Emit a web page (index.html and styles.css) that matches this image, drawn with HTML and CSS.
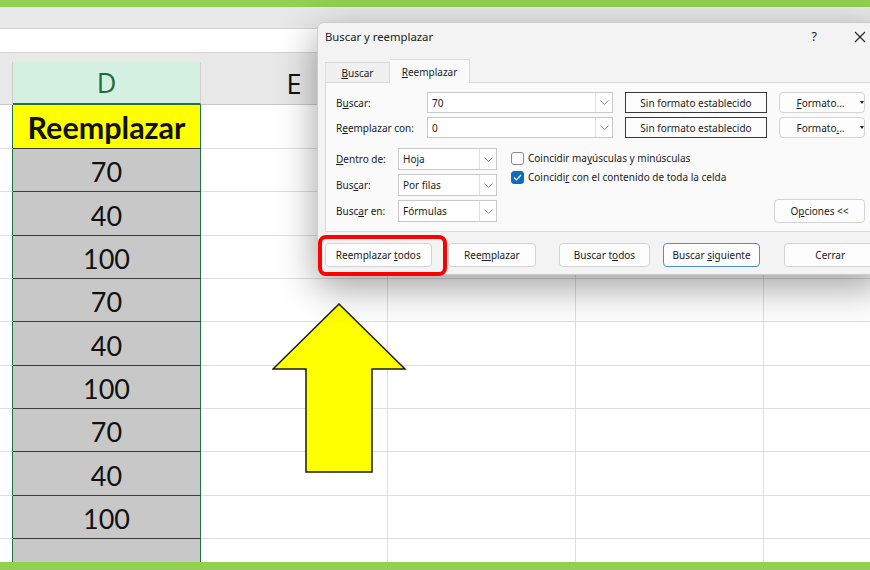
FILE: index.html
```html
<!DOCTYPE html>
<html lang="es">
<head>
    <meta charset="UTF-8">
    <title>Buscar y reemplazar</title>
    <link rel="stylesheet" href="styles.css">
</head>
<body>
<div class="pantalla">

    <div class="franja"></div>
    <div class="cinta"></div>
    <div class="barra_formula"></div>

    <!-- hoja de calculo -->
    <div class="hoja">
        <div class="fila encabezados">
            <div class="celda c"></div>
            <div class="celda d">D</div>
            <div class="celda e">E</div>
            <div class="celda f"></div>
            <div class="celda g"></div>
            <div class="celda h"></div>
        </div>
        <div class="fila primera">
            <div class="celda c"></div>
            <div class="celda d titulo_col">Reemplazar</div>
            <div class="celda e"></div><div class="celda f"></div><div class="celda g"></div><div class="celda h"></div>
        </div>
        <div class="fila">
            <div class="celda c"></div><div class="celda d">70</div>
            <div class="celda e"></div><div class="celda f"></div><div class="celda g"></div><div class="celda h"></div>
        </div>
        <div class="fila">
            <div class="celda c"></div><div class="celda d">40</div>
            <div class="celda e"></div><div class="celda f"></div><div class="celda g"></div><div class="celda h"></div>
        </div>
        <div class="fila">
            <div class="celda c"></div><div class="celda d">100</div>
            <div class="celda e"></div><div class="celda f"></div><div class="celda g"></div><div class="celda h"></div>
        </div>
        <div class="fila">
            <div class="celda c"></div><div class="celda d">70</div>
            <div class="celda e"></div><div class="celda f"></div><div class="celda g"></div><div class="celda h"></div>
        </div>
        <div class="fila">
            <div class="celda c"></div><div class="celda d">40</div>
            <div class="celda e"></div><div class="celda f"></div><div class="celda g"></div><div class="celda h"></div>
        </div>
        <div class="fila">
            <div class="celda c"></div><div class="celda d">100</div>
            <div class="celda e"></div><div class="celda f"></div><div class="celda g"></div><div class="celda h"></div>
        </div>
        <div class="fila">
            <div class="celda c"></div><div class="celda d">70</div>
            <div class="celda e"></div><div class="celda f"></div><div class="celda g"></div><div class="celda h"></div>
        </div>
        <div class="fila">
            <div class="celda c"></div><div class="celda d">40</div>
            <div class="celda e"></div><div class="celda f"></div><div class="celda g"></div><div class="celda h"></div>
        </div>
        <div class="fila">
            <div class="celda c"></div><div class="celda d">100</div>
            <div class="celda e"></div><div class="celda f"></div><div class="celda g"></div><div class="celda h"></div>
        </div>
        <div class="fila">
            <div class="celda c"></div><div class="celda d"></div>
            <div class="celda e"></div><div class="celda f"></div><div class="celda g"></div><div class="celda h"></div>
        </div>
    </div>

    <div class="franja abajo"></div>

    <!-- flecha amarilla -->
    <svg class="flecha" width="140" height="175" viewBox="0 0 140 175">
        <polygon points="67,2 1,67 34,67 34,170 100,170 100,67 133,67" fill="#ffff00" stroke="#1a1a1a" stroke-width="1.5"/>
    </svg>

    <!-- ventana buscar y reemplazar -->
    <div class="dialogo">
        <div class="dlg_titulo">
            <span>Buscar y reemplazar</span>
            <span class="ayuda">?</span>
            <svg class="cerrar_x" width="12" height="12" viewBox="0 0 12 12">
                <path d="M1 1 L11 11 M11 1 L1 11" stroke="#222" stroke-width="1.1" fill="none"/>
            </svg>
        </div>

        <div class="pestanas">
            <div class="pestana"><span><u>B</u>uscar</span></div>
            <div class="pestana activa"><span><u>R</u>eemplazar</span></div>
        </div>

        <div class="panel">
            <div class="campos">
                <label>B<u>u</u>scar:</label>
                <div class="combo">
                    <span>70</span>
                    <span class="flechita"><svg width="9" height="5" viewBox="0 0 9 5"><path d="M0.5 0.5 L4.5 4.5 L8.5 0.5" stroke="#8a8a8a" fill="none"/></svg></span>
                </div>
                <div class="sin_formato">Sin formato establecido</div>
                <div class="boton formato"><span><u>F</u>ormato...</span><span class="tri"></span></div>

                <label>R<u>e</u>emplazar con:</label>
                <div class="combo">
                    <span>0</span>
                    <span class="flechita"><svg width="9" height="5" viewBox="0 0 9 5"><path d="M0.5 0.5 L4.5 4.5 L8.5 0.5" stroke="#8a8a8a" fill="none"/></svg></span>
                </div>
                <div class="sin_formato">Sin formato establecido</div>
                <div class="boton formato"><span>Formato<u>.</u>..</span><span class="tri"></span></div>
            </div>

            <div class="opciones">
                <div class="selectores">
                    <label><u>D</u>entro de:</label>
                    <div class="combo"><span>Hoja</span><span class="flechita"><svg width="9" height="5" viewBox="0 0 9 5"><path d="M0.5 0.5 L4.5 4.5 L8.5 0.5" stroke="#8a8a8a" fill="none"/></svg></span></div>
                    <label>Bus<u>c</u>ar:</label>
                    <div class="combo"><span>Por filas</span><span class="flechita"><svg width="9" height="5" viewBox="0 0 9 5"><path d="M0.5 0.5 L4.5 4.5 L8.5 0.5" stroke="#8a8a8a" fill="none"/></svg></span></div>
                    <label>Busc<u>a</u>r en:</label>
                    <div class="combo"><span>Fórmulas</span><span class="flechita"><svg width="9" height="5" viewBox="0 0 9 5"><path d="M0.5 0.5 L4.5 4.5 L8.5 0.5" stroke="#8a8a8a" fill="none"/></svg></span></div>
                </div>

                <div class="casillas">
                    <div class="casilla"><span class="caja"></span><span>Coincidir ma<u>y</u>úsculas y minúsculas</span></div>
                    <div class="casilla"><span class="caja marcada"><svg width="9" height="7" viewBox="0 0 9 7"><path d="M1 3.5 L3.5 6 L8 1" stroke="#fff" stroke-width="1.2" fill="none"/></svg></span><span>Coincidi<u>r</u> con el contenido de toda la celda</span></div>
                </div>

                <div class="boton btn_opciones"><span>O<u>p</u>ciones &lt;&lt;</span></div>
            </div>
        </div>

        <div class="acciones">
            <div class="boton b_todos"><span>Reemplazar <u>t</u>odos</span></div>
            <div class="boton b_reemp"><span>Ree<u>m</u>plazar</span></div>
            <div class="boton b_buscar_todos"><span>Buscar t<u>o</u>dos</span></div>
            <div class="boton b_siguiente"><span>Buscar <u>s</u>iguiente</span></div>
            <div class="boton b_cerrar"><span>Cerrar</span></div>
        </div>
    </div>

    <!-- marco rojo -->
    <div class="resaltado"></div>

</div>
</body>
</html>
```

FILE: styles.css
```css
* {
    box-sizing: border-box;
}
body {
    margin: 0;
    background: #ffffff;
}
.pantalla {
    position: relative;
    width: 870px;
    height: 570px;
    overflow: hidden;
    font-family: "Noto Sans", "Open Sans", sans-serif;
}
.franja {
    height: 7px;
    background: #92d050;
}
.franja.abajo {
    height: 8px;
}
.cinta {
    height: 21px;
    background: #e8e8e8;
}
.barra_formula {
    height: 25px;
    background: #ffffff;
    border-top: 1px solid #d2d2d2;
    border-bottom: 1px solid #d2d2d2;
}

/* hoja */
.hoja {
    height: 509px;
    overflow: hidden;
}
.fila {
    display: flex;
    height: 43.35px;
}
.fila.primera {
    height: 44px;
}
.celda {
    height: 100%;
    border-right: 1px solid #dedede;
    border-bottom: 1px solid #dedede;
    flex: none;
}
.c { width: 13px; border-right-color: #217346; }
.d {
    width: 188px;
    border-right-color: #217346;
    background: #c8c8c8;
    border-bottom: 1px solid #3c3c3c;
    display: flex;
    align-items: center;
    justify-content: center;
    font-family: Lato, "Liberation Sans", sans-serif;
    font-size: 27px;
    color: #111;
    padding-top: 3px;
}
.e { width: 187px; }
.f { width: 188px; }
.g { width: 188px; }
.h { flex: 1; border-right: 0; }

.d.titulo_col {
    background: #ffff00;
    font-weight: 700;
    font-size: 30.5px;
    padding-top: 1px;
}

.encabezados {
    height: 52px;
    padding-top: 9px;
    background: #e8e8e8;
}
.encabezados .celda {
    border-bottom: 1px solid #c9c9c9;
    border-right-color: #d0d0d0;
    background: #e8e8e8;
}
.encabezados .d {
    background: #d3f0e0;
    color: #1d6b40;
    font-family: "Open Sans", sans-serif;
    font-size: 27px;
    border-bottom: 2px solid #217346;
    padding-top: 0;
}
.encabezados .e {
    display: flex;
    align-items: center;
    justify-content: center;
    font-family: "Open Sans", sans-serif;
    font-size: 27px;
    color: #111;
}

/* flecha */
.flecha {
    position: absolute;
    left: 272px;
    top: 302px;
}

/* dialogo */
.dialogo {
    position: absolute;
    left: 317px;
    top: 22px;
    width: 567px;
    height: 253px;
    background: #f3f3f3;
    border: 1px solid #cdcdcd;
    border-radius: 7px;
    box-shadow: 0 12px 38px rgba(0, 0, 0, 0.38);
    font-size: 10px;
    color: #1b1b1b;
}
.dlg_titulo {
    height: 36px;
    display: flex;
    align-items: flex-start;
    padding: 6px 0 0 7px;
    font-size: 11.3px;
}
.ayuda {
    margin-left: auto;
    font-size: 12.5px;
    margin-right: 37px;
    margin-top: -1px;
}
.cerrar_x {
    margin-right: 17px;
    margin-top: 2px;
}
.pestanas {
    display: flex;
    align-items: flex-end;
    height: 23px;
    margin-left: 7px;
}
.pestana {
    height: 20px;
    width: 65px;
    display: flex;
    align-items: center;
    justify-content: center;
    border: 1px solid #dadada;
    border-bottom: 0;
    background: #f0f0f0;
}
.pestana.activa {
    height: 24px;
    width: 80px;
    background: #fafafa;
    margin-bottom: -1px;
    position: relative;
    z-index: 1;
    border-left: 0;
}
.panel {
    margin: 0 7px;
    height: 150px;
    background: #fafafa;
    border: 1px solid #dadada;
    padding: 9px 10px 0 10px;
}
.campos {
    display: grid;
    grid-template-columns: 91px 186px 154px 98px;
    grid-auto-rows: 21px;
    row-gap: 4px;
    align-items: center;
}
label {
    white-space: nowrap;
}
.combo {
    height: 100%;
    display: flex;
    align-items: center;
    background: #fff;
    border: 1px solid #c9c9c9;
    padding-left: 4px;
}
.combo span:first-child {
    flex: 1;
}
.flechita {
    width: 17px;
    height: 100%;
    border-left: 1px solid #e0e0e0;
    display: flex;
    align-items: center;
    justify-content: center;
}
.sin_formato {
    height: 100%;
    margin-left: 12px;
    border: 1px solid #3a3a3a;
    background: #fdfdfd;
    display: flex;
    align-items: center;
    justify-content: center;
}
.boton {
    height: 24px;
    background: #fdfdfd;
    border: 1px solid #d3d3d3;
    border-radius: 4px;
    display: flex;
    align-items: center;
    justify-content: center;
    white-space: nowrap;
}
.formato {
    height: 100%;
    margin-left: 12px;
    padding-left: 16px;
}
.tri {
    width: 0;
    height: 0;
    border-left: 2.5px solid transparent;
    border-right: 2.5px solid transparent;
    border-top: 3px solid #222;
    margin-left: 15px;
}
.opciones {
    display: flex;
    margin-top: 10px;
}
.selectores {
    display: grid;
    grid-template-columns: 62px 99px;
    grid-auto-rows: 22px;
    row-gap: 4px;
    align-items: center;
}
.casillas {
    margin-left: 14px;
    padding-top: 3px;
    display: flex;
    flex-direction: column;
    gap: 5px;
}
.casilla {
    display: flex;
    align-items: center;
    height: 14px;
}
.caja {
    width: 13px;
    height: 13px;
    border: 1px solid #8a8a8a;
    border-radius: 3px;
    background: #fff;
    margin-right: 4px;
    display: flex;
    align-items: center;
    justify-content: center;
}
.caja.marcada {
    background: #0f6cbd;
    border-color: #0f6cbd;
}
.btn_opciones {
    margin-left: auto;
    align-self: flex-end;
    width: 91px;
    margin-bottom: -1px;
}
.acciones {
    display: flex;
    padding: 11px 7px 0 7px;
}
.b_todos { width: 107px; }
.b_reemp { width: 89px; margin-left: 16px; }
.b_buscar_todos { width: 91px; margin-left: 23px; }
.b_siguiente { width: 98px; margin-left: 13px; border-color: #4a8fd8; }
.b_cerrar { width: 92px; margin-left: 24px; }

.resaltado {
    position: absolute;
    left: 318px;
    top: 235px;
    width: 129px;
    height: 41px;
    border: 4px solid #ff0000;
    border-radius: 8px;
}
```
